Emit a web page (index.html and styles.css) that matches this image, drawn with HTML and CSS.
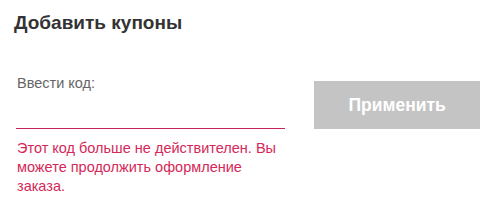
FILE: index.html
```html
<!DOCTYPE html>
<html lang="ru">
<head>
  <meta charset="UTF-8">
  <meta name="viewport" content="width=device-width, initial-scale=1.0">
  <title>Купоны</title>
  <link rel="stylesheet" href="styles.css">
</head>
<body>
  <div class="coupons">
    <h2 class="coupons-title">Добавить купоны</h2>
    <div class="coupon-form">
      <div class="coupon-field">
        <label for="couponCode">Ввести код:</label>
        <input type="text" id="couponCode" class="coupon-input">
        <div class="coupon-error">Этот код больше не действителен. Вы можете продолжить оформление заказа.</div>
      </div>
      <button class="btn-apply" disabled>Применить</button>
    </div>
  </div>
</body>
</html>
```

FILE: styles.css
```css
body {
  margin: 0;
  background-color: #fff;
  font-family: 'Liberation Sans', Arial, sans-serif;
}
.coupons {
  padding: 11px 16px 0 14px;
}
.coupons-title {
  margin: 0;
  font-size: 19px;
  line-height: 24px;
  font-weight: bold;
  color: #333;
}
.coupon-form {
  display: flex;
  align-items: flex-start;
  gap: 29px;
  margin-top: 40px;
  padding-left: 2px;
}
.coupon-field {
  width: 270px;
}
.coupon-field label {
  display: block;
  font-size: 14.5px;
  line-height: 16px;
  color: #666;
  padding-left: 1px;
}
.coupon-input {
  display: block;
  width: 100%;
  box-sizing: border-box;
  height: 38px;
  border: none;
  border-bottom: 1px solid #c8245a;
  outline: none;
  font: inherit;
  background: transparent;
}
.coupon-error {
  margin-top: 10px;
  padding: 0 4px 0 1px;
  font-size: 14.5px;
  line-height: 19px;
  color: #d42858;
}
.btn-apply {
  margin-top: 6px;
  width: 166px;
  height: 48px;
  border: none;
  background-color: #c4c4c4;
  color: #fff;
  font-family: inherit;
  font-size: 17.5px;
  font-weight: bold;
}
```
